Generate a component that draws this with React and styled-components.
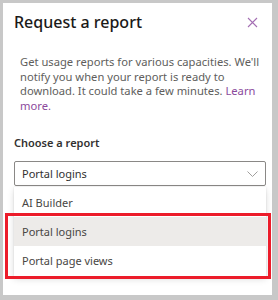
import styled, { createGlobalStyle } from "styled-components";

const GlobalStyle = createGlobalStyle`
  html, body {
    margin: 0;
    padding: 0;
    background: #c8c8c8;
  }
  body {
    font-family: "Noto Sans", "Open Sans", sans-serif;
    color: #323130;
  }
`;

const Panel = styled.div`
  box-sizing: border-box;
  width: 269px;
  height: 292px;
  margin: 3px 0 0 3px;
  padding: 7px 6px 0 11px;
  background: #ffffff;
`;

const Header = styled.div`
  display: flex;
  align-items: center;
  justify-content: space-between;
  height: 24px;
`;

const Title = styled.h2`
  margin: 0;
  font-size: 16px;
  font-weight: 500;
  line-height: 24px;
  color: #1b1a19;
`;

const CloseButton = styled.button`
  display: flex;
  align-items: center;
  justify-content: center;
  width: 20px;
  height: 20px;
  margin-right: 4px;
  padding: 0;
  border: none;
  background: none;
  color: #a46fb3;
`;

const Description = styled.p`
  margin: 21px 0 0 6px;
  font-size: 11.2px;
  line-height: 14.5px;
  color: #605e5c;
  white-space: nowrap;
`;

const Link = styled.a`
  color: #8b4a9c;
  text-decoration: none;
`;

const Label = styled.div`
  margin-top: 22px;
  font-size: 11px;
  font-weight: 600;
  line-height: 16px;
  color: #323130;
`;

const Field = styled.div`
  position: relative;
  margin-top: 10px;
`;

const Select = styled.div`
  box-sizing: border-box;
  display: flex;
  align-items: center;
  justify-content: space-between;
  height: 25px;
  padding: 0 7px 0 7px;
  border: 1px solid #8a8886;
  border-radius: 2px;
  font-size: 11px;
  color: #323130;
`;

const Menu = styled.div`
  position: relative;
  margin-top: 1px;
  padding: 1px 0;
  background: #ffffff;
  box-shadow: 0 3px 7px rgba(0, 0, 0, 0.14), 0 0 2px rgba(0, 0, 0, 0.1);
`;

const Option = styled.div`
  display: flex;
  align-items: center;
  height: 29px;
  padding-left: 8px;
  font-size: 11px;
  color: #484644;
  background: ${(p) => (p.$selected ? "#edebe9" : "transparent")};
`;

const Highlight = styled.div`
  position: absolute;
  top: 26px;
  left: -9px;
  width: 266px;
  height: 66px;
  box-sizing: border-box;
  border: 3px solid #ec1c2a;
  pointer-events: none;
`;

const options = ["AI Builder", "Portal logins", "Portal page views"];

function App() {
  return (
    <>
      <GlobalStyle />
      <Panel>
        <Header>
          <Title>Request a report</Title>
          <CloseButton aria-label="Close">
            <svg width="11" height="11" viewBox="0 0 11 11">
              <path d="M1 1L10 10M10 1L1 10" stroke="currentColor" strokeWidth="1.1" fill="none" />
            </svg>
          </CloseButton>
        </Header>
        <Description>
          Get usage reports for various capacities. We'll
          <br />
          notify you when your report is ready to
          <br />
          download. It could take a few minutes. <Link href="#">Learn</Link>
          <br />
          <Link href="#">more.</Link>
        </Description>
        <Label>Choose a report</Label>
        <Field>
          <Select>
            <span>Portal logins</span>
            <svg width="11" height="6" viewBox="0 0 11 6">
              <path d="M0.5 0.5L5.5 5.5L10.5 0.5" stroke="#a19f9d" strokeWidth="1" fill="none" />
            </svg>
          </Select>
          <Menu>
            {options.map((o) => (
              <Option key={o} $selected={o === "Portal logins"}>
                {o}
              </Option>
            ))}
            <Highlight />
          </Menu>
        </Field>
      </Panel>
    </>
  );
}

export default App;
